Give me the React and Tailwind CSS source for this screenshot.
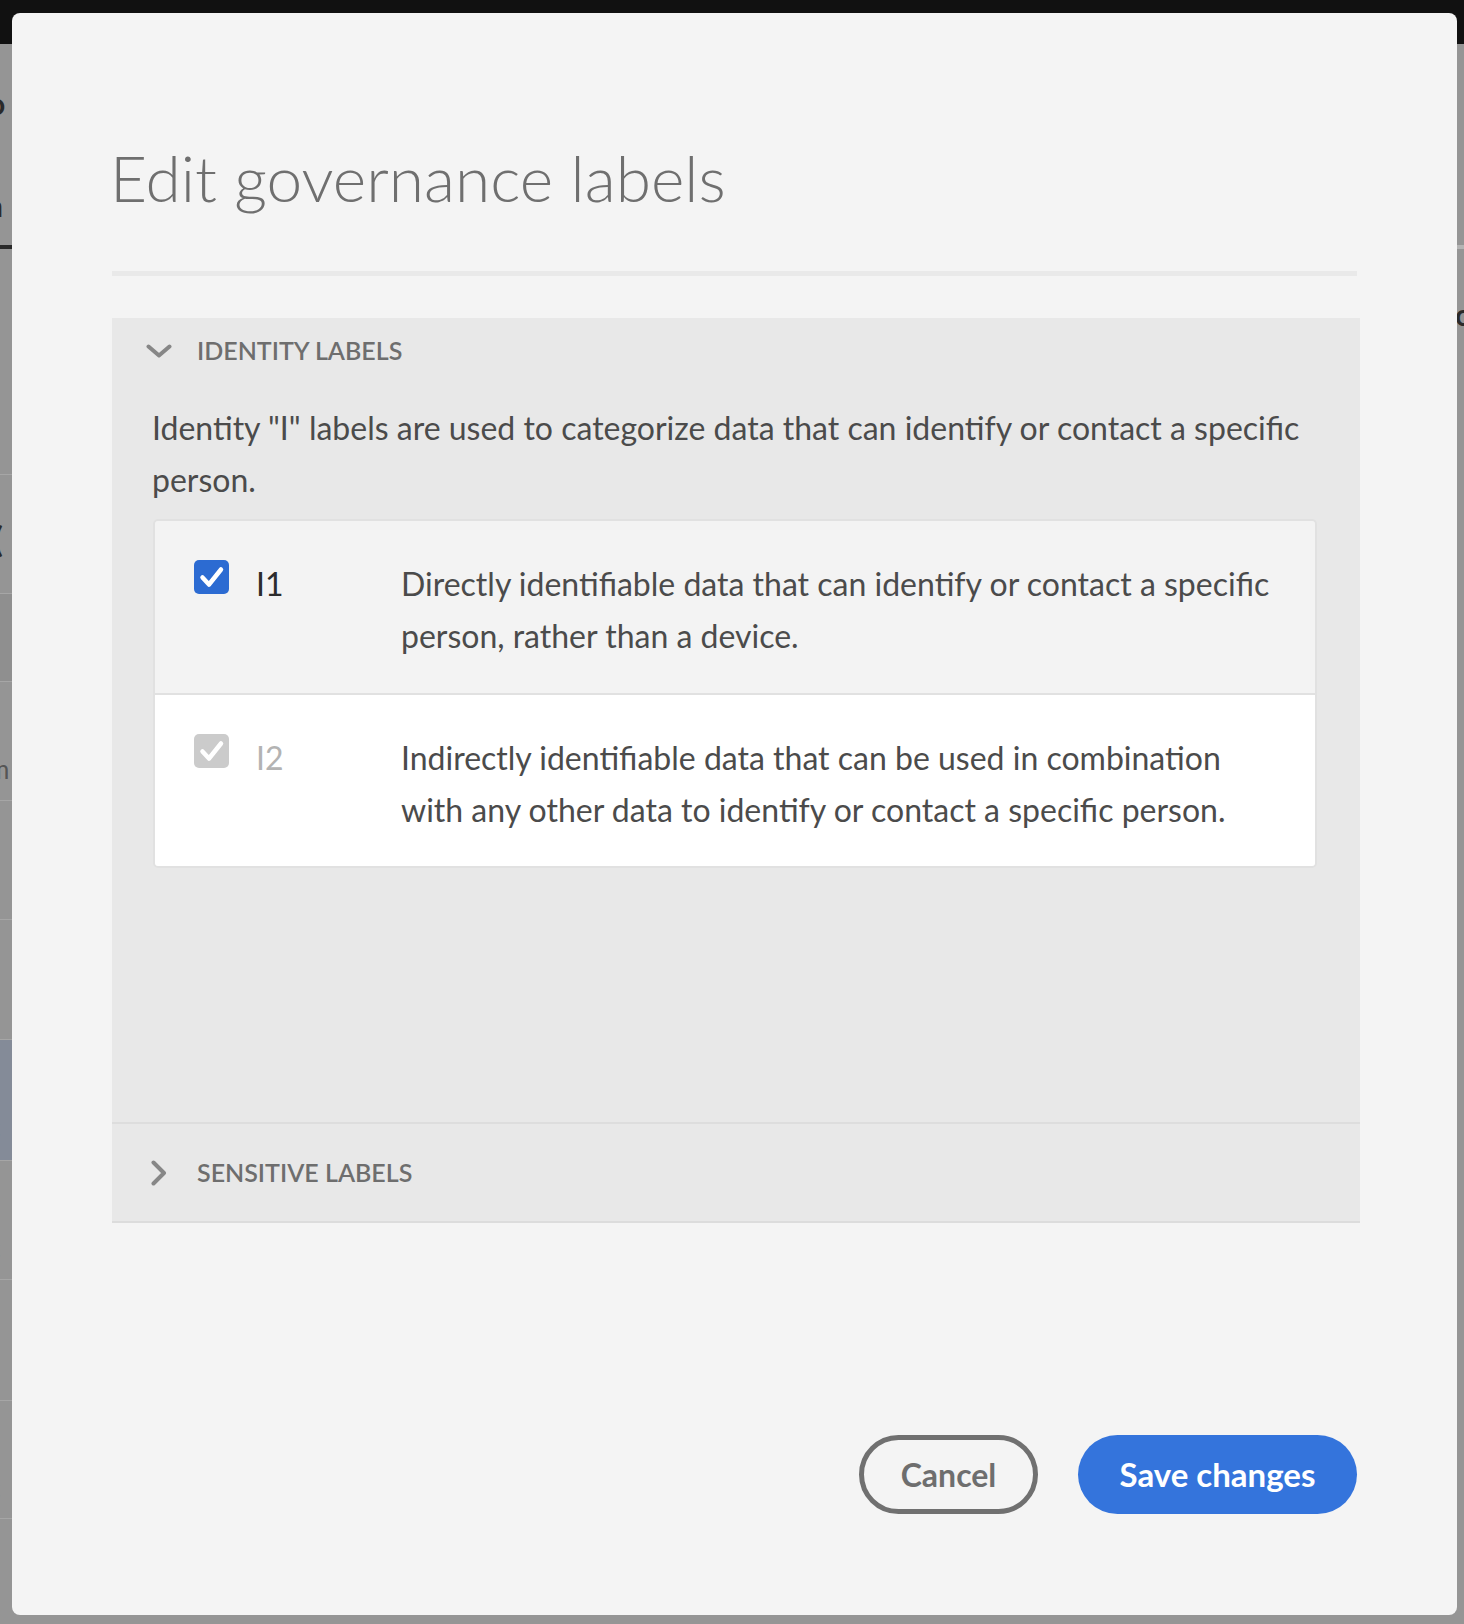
import React from 'react';

const ChevronDown = () => (
  <svg width="26" height="14" viewBox="0 0 26 14" fill="none">
    <path d="M2.5 2.5 L13 11.5 L23.5 2.5" stroke="#878787" strokeWidth="4" strokeLinecap="round" strokeLinejoin="round" />
  </svg>
);

const ChevronRight = () => (
  <svg width="16" height="26" viewBox="0 0 16 26" fill="none">
    <path d="M2.5 2.5 L13 13 L2.5 23.5" stroke="#878787" strokeWidth="4" strokeLinecap="round" strokeLinejoin="round" />
  </svg>
);

// checkbox drawn as a small rounded square with a tick
const Check = ({ disabled }) => (
  <div
    className={`w-[35px] h-[34px] rounded-[5px] mt-[2px] shrink-0 flex items-center justify-center ${
      disabled ? 'bg-[#cbcbcb]' : 'bg-[#2c6bd2]'
    }`}
  >
    <svg width="35" height="34" viewBox="0 0 35 34" fill="none">
      <path d="M8.5 17.5 L15 24.5 L27 9.5" stroke="#ffffff" strokeWidth="4.5" strokeLinecap="round" strokeLinejoin="round" />
    </svg>
  </div>
);

const LabelRow = ({ code, text, disabled, className }) => (
  <div className={`flex items-start pl-[39px] pt-[37px] ${className}`}>
    <Check disabled={disabled} />
    <div
      className={`ml-[27px] w-[145px] shrink-0 text-[32px] leading-[52px] ${
        disabled ? 'text-[#b3b3b3]' : 'text-[#2c2c2c]'
      }`}
    >
      {code}
    </div>
    <p className="flex-1 pr-[38px] text-[32px] leading-[52px] text-[#4b4b4b]">{text}</p>
  </div>
);

// bits of the page behind the dialog that peek out on the left edge
const bgRows = [
  { h: 'h-[119px]', txt: 'm', tint: '' },
  { h: 'h-[119px]', txt: 'r', tint: '' },
  { h: 'h-[120px]', txt: 'r', tint: '' },
  { h: 'h-[121px]', txt: 'c', tint: 'bg-[#848b98]' },
  { h: 'h-[119px]', txt: 'c', tint: '' },
  { h: 'h-[121px]', txt: 'r', tint: '' },
  { h: 'h-[118px]', txt: 'c', tint: '' },
  { h: 'h-[106px]', txt: '', tint: '' },
];

const LeftStrip = () => (
  <div className="w-[12px] overflow-hidden flex flex-col">
    <div className="h-[201px] flex flex-col">
      <span className="block -ml-[12px] mt-[42px] text-[30px] leading-[34px] font-bold text-[#2a2a2a]">o</span>
      <span className="block -ml-[14px] mt-[68px] text-[30px] leading-[34px] font-bold text-[#2a2a2a]">n</span>
    </div>
    <div className="h-[4px] bg-[#2a2a2a]" />
    <div className="h-[225px]" />
    <div className="h-px bg-[#a6a6a6]" />
    <div className="h-[118px] pt-[44px]">
      <span className="block -ml-[6px] text-[34px] leading-[40px] text-[#2a2a2a]">(</span>
    </div>
    <div className="h-px bg-[#a6a6a6]" />
    <div className="h-[87px] bg-[#8f8f8f]" />
    {bgRows.map((r, i) => (
      <div key={i} className={`${r.h} border-t border-[#a6a6a6] ${r.tint}`}>
        <span className="block -ml-[12px] mt-[70px] text-[26px] leading-[34px] text-[#555555]">{r.txt}</span>
      </div>
    ))}
  </div>
);

const RightStrip = () => (
  <div className="w-[7px] overflow-hidden flex flex-col">
    <div className="h-[201px]" />
    <div className="h-[4px] bg-[#b4b4b4]" />
    <span className="block -ml-[2px] mt-[48px] text-[30px] leading-[34px] font-bold text-[#2a2a2a]">o</span>
  </div>
);

export default function App() {
  return (
    <div
      className="relative w-[1464px] h-[1624px] bg-[#959595] overflow-hidden"
      style={{ fontFamily: 'Lato, "Open Sans", sans-serif' }}
    >
      <div className="h-[44px] bg-[#111111]" />
      <div className="flex justify-between">
        <LeftStrip />
        <RightStrip />
      </div>

      {/* dialog */}
      <div className="absolute left-[12px] top-[13px] w-[1445px] h-[1602px] rounded-[8px] bg-[#f4f4f4] flex flex-col px-[100px] pb-[101px]">
        <h1 className="mt-[127px] -ml-[2px] text-[64px] leading-[76px] font-light text-[#6f6f6f]">Edit governance labels</h1>
        <div className="mt-[55px] h-[5px] bg-[#e9e9e9]" />

        <section className="mt-[42px] -mr-[3px] bg-[#e8e8e8] border-b-2 border-[#dcdcdc]">
          <div className="h-[66px] flex items-center pl-[34px]">
            <div className="w-[26px] flex justify-center">
              <ChevronDown />
            </div>
            <span className="ml-[25px] text-[25px] font-semibold uppercase text-[#6e6e6e]">Identity labels</span>
          </div>

          <div className="pb-[254px]">
            <p className="mt-[18px] px-[40px] text-[32px] leading-[52px] text-[#4b4b4b]">
              Identity "I" labels are used to categorize data that can identify or contact a specific person.
            </p>
            <div className="mt-[13px] ml-[41px] mr-[43px] rounded-[5px] border-2 border-[#e1e1e1] overflow-hidden">
              <LabelRow
                code="I1"
                className="h-[174px] bg-[#f3f3f3] border-b-2 border-[#e1e1e1]"
                text="Directly identifiable data that can identify or contact a specific person, rather than a device."
              />
              <LabelRow
                code="I2"
                disabled
                className="h-[171px] bg-white"
                text="Indirectly identifiable data that can be used in combination with any other data to identify or contact a specific person."
              />
            </div>
          </div>

          <div className="h-[2px] bg-[#dddddd]" />
          <div className="h-[97px] flex items-center pl-[34px]">
            <div className="w-[26px] flex justify-center">
              <ChevronRight />
            </div>
            <span className="ml-[25px] text-[25px] font-semibold uppercase text-[#6e6e6e]">Sensitive labels</span>
          </div>
        </section>

        <div className="mt-auto flex justify-end gap-[40px]">
          <button className="w-[179px] h-[79px] rounded-full border-[5px] border-[#707070] text-[32px] font-bold text-[#6e6e6e]">
            Cancel
          </button>
          <button className="w-[279px] h-[79px] rounded-full bg-[#3474dc] text-[33px] font-bold text-white">
            Save changes
          </button>
        </div>
      </div>
    </div>
  );
}
